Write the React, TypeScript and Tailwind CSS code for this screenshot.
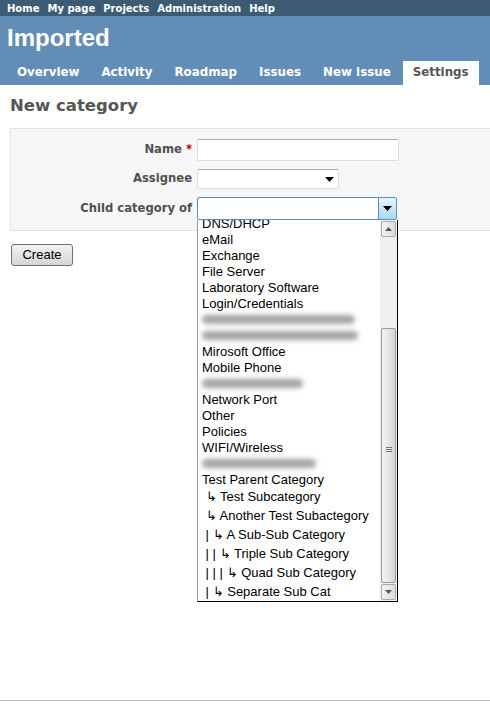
import React from 'react';

const verdana = { fontFamily: '"DejaVu Sans", Verdana, sans-serif' };
const arial = { fontFamily: '"Liberation Sans", Arial, sans-serif' };

function Caret() {
  return (
    <svg width="9" height="5" viewBox="0 0 9 5" className="block">
      <path d="M0 0h9L4.5 5z" fill="#000" />
    </svg>
  );
}

type Item = { label?: string; blur?: number; tall?: boolean };

const items: Item[] = [
  { label: 'DNS/DHCP' },
  { label: 'eMail' },
  { label: 'Exchange' },
  { label: 'File Server' },
  { label: 'Laboratory Software' },
  { label: 'Login/Credentials' },
  { blur: 153 },
  { blur: 156 },
  { label: 'Mirosoft Office' },
  { label: 'Mobile Phone' },
  { blur: 101 },
  { label: 'Network Port' },
  { label: 'Other' },
  { label: 'Policies' },
  { label: 'WIFI/Wireless' },
  { blur: 114 },
  { label: 'Test Parent Category' },
  { label: '\u00a0\u21b3 Test Subcategory', tall: true },
  { label: '\u00a0\u21b3 Another Test Subactegory', tall: true },
  { label: '\u00a0| \u21b3 A Sub-Sub Category', tall: true },
  { label: '\u00a0| | \u21b3 Triple Sub Category', tall: true },
  { label: '\u00a0| | | \u21b3 Quad Sub Category', tall: true },
  { label: '\u00a0| \u21b3 Separate Sub Cat', tall: true },
];

function DropdownList() {
  return (
    <div className="absolute left-0 top-[23px] w-[201px] h-[382px] bg-white border border-black border-l-[#9a9a9a] border-t-0 flex overflow-hidden z-10">
      <div className="flex-1 overflow-hidden">
        <div className="-mt-[5px] pl-[4px] text-[13px] font-normal text-black leading-none" style={arial}>
          {items.map((it, i) =>
            it.blur ? (
              <div key={i} className="h-[16px] flex items-center">
                <div className="h-[9px] rounded-full bg-[#a4a4a4] blur-[2.5px]" style={{ width: it.blur }} />
              </div>
            ) : (
              <div key={i} className={`${it.tall ? 'h-[19px]' : 'h-[16px]'} flex items-center whitespace-pre`}>
                {it.label}
              </div>
            ),
          )}
        </div>
      </div>
      {/* scrollbar */}
      <div className="w-[17px] bg-[#f0f0f0] flex flex-col pt-[1px] pb-[1px]">
        <div className="h-[16px] mx-[1px] border border-[#a8a8a8] rounded-[2px] bg-gradient-to-r from-[#f3f3f3] to-[#dcdcdc] flex items-center justify-center">
          <svg width="7" height="4" viewBox="0 0 7 4"><path d="M0 4h7L3.5 0z" fill="#555" /></svg>
        </div>
        <div className="h-[91px]" />
        <div className="flex-1 mx-[1px] border border-[#9b9b9b] rounded-[2px] bg-gradient-to-r from-[#f2f2f2] via-[#e6e6e6] to-[#d4d4d4] flex items-center justify-center">
          <div className="flex flex-col gap-[1px] mt-[-12px]">
            <div className="w-[6px] h-[1px] bg-[#777]" />
            <div className="w-[6px] h-[1px] bg-[#777]" />
            <div className="w-[6px] h-[1px] bg-[#777]" />
          </div>
        </div>
        <div className="h-[16px] mx-[1px] mt-[1px] border border-[#a8a8a8] rounded-[2px] bg-gradient-to-r from-[#f3f3f3] to-[#dcdcdc] flex items-center justify-center">
          <svg width="7" height="4" viewBox="0 0 7 4"><path d="M0 0h7L3.5 4z" fill="#555" /></svg>
        </div>
      </div>
    </div>
  );
}

export default function App() {
  const tabs = ['Overview', 'Activity', 'Roadmap', 'Issues', 'New issue', 'Settings'];
  return (
    <div className="w-[490px] h-[724px] bg-white flex flex-col overflow-hidden" style={verdana}>
      {/* top menu */}
      <div className="h-[16px] bg-[#3e5b76] flex items-center gap-[8px] pl-[7px] text-[10px] font-bold text-white whitespace-nowrap">
        {['Home', 'My page', 'Projects', 'Administration', 'Help'].map((m) => (
          <span key={m}>{m}</span>
        ))}
      </div>

      {/* header */}
      <div className="bg-[#628db6] h-[69px] flex flex-col justify-between">
        <h1 className="pl-[7px] pt-[7px] text-[24px] font-bold text-white leading-[30px]" style={arial}>
          Imported
        </h1>
        <div className="flex pl-[7px] gap-[2px] text-[11.85px] font-bold whitespace-nowrap">
          {tabs.map((t) => (
            <span
              key={t}
              className={`h-[24px] px-[10px] flex items-center ${t === 'Settings' ? 'bg-white text-[#555]' : 'text-white'}`}
            >
              {t}
            </span>
          ))}
        </div>
      </div>

      {/* content */}
      <div className="flex-1 pl-[10px] pt-[9px]">
        <h2 className="text-[16.5px] font-bold text-[#555] leading-[24px]">New category</h2>

        <div className="mt-[10px] h-[103px] mr-[-2px] bg-[#f6f6f6] border border-[#e4e4e4] pt-[10px]">
          <div className="grid grid-cols-[181px_1fr] gap-x-[5px] gap-y-[8px] items-center text-[11.6px] font-bold text-[#505050]">
            <span className="text-right">
              Name <span className="text-[#bb0000]">*</span>
            </span>
            <div className="w-[202px] h-[22px] bg-white border border-[#dbdfe6] border-t-[#abadb3] rounded-[2px]" />

            <span className="text-right">Assignee</span>
            <div className="w-[142px] h-[20px] bg-white border border-[#dbdfe6] border-t-[#abadb3] rounded-[2px] flex items-center justify-end pr-[4px]">
              <Caret />
            </div>

            <span className="text-right">Child category of</span>
            <div className="relative w-[200px] h-[23px]">
              <div className="w-[200px] h-[23px] bg-white border border-[#5d8dba] rounded-[2px] flex justify-end">
                <div className="w-[18px] h-full border-l border-[#5d8dba] bg-gradient-to-b from-[#e6f4fc] to-[#a9d8f3] flex items-center justify-center">
                  <Caret />
                </div>
              </div>
              <DropdownList />
            </div>
          </div>
        </div>

        <button
          className="mt-[13px] ml-[1px] w-[62px] h-[22px] border border-[#707070] rounded-[3px] bg-gradient-to-b from-[#f2f2f2] to-[#d6d6d6] text-[13px] text-black flex items-center justify-center"
          style={arial}
        >
          Create
        </button>
      </div>

      {/* footer */}
      <div className="h-[24px] border-t border-[#bbbbbb]" />
    </div>
  );
}
